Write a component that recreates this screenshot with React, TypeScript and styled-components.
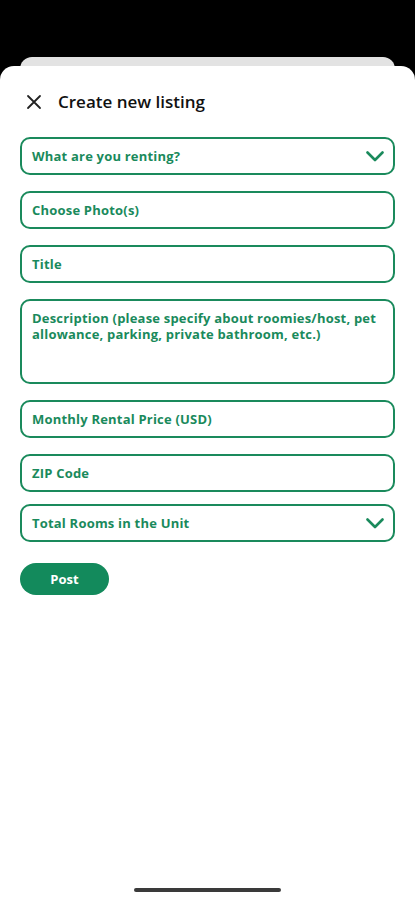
import React from 'react'
import styled, { createGlobalStyle } from 'styled-components'

const GlobalStyle = createGlobalStyle`
  html, body {
    margin: 0;
    padding: 0;
    background: #000;
  }
  body {
    font-family: 'Open Sans', 'Noto Sans', sans-serif;
  }
`

const green = '#1a8a5c'

const Screen = styled.div`
  width: 415px;
  height: 900px;
  background: #000;
  display: flex;
  flex-direction: column;
  overflow: hidden;
`

const BackCard = styled.div`
  height: 20px;
  margin: 57px 20px 0;
  background: #e3e3e3;
  border-radius: 12px 12px 0 0;
  flex-shrink: 0;
`

const Sheet = styled.div`
  flex: 1;
  margin-top: -11px;
  background: #fff;
  border-radius: 14px 14px 0 0;
  display: flex;
  flex-direction: column;
  padding: 0 20px;
`

const Header = styled.div`
  display: flex;
  align-items: center;
  gap: 16px;
  height: 71px;
  padding-left: 6px;
`

const Title = styled.h1`
  margin: 0;
  font-size: 17px;
  font-weight: 600;
  color: #111;
`

const Form = styled.div`
  display: flex;
  flex-direction: column;
`

const Field = styled.div<{ $tall?: boolean; $gap?: number }>`
  box-sizing: border-box;
  height: ${(p) => (p.$tall ? 85 : 38)}px;
  margin-bottom: ${(p) => p.$gap ?? 16}px;
  border: 2px solid ${green};
  border-radius: 10px;
  padding: ${(p) => (p.$tall ? '9px' : '0')} 9px 0 10px;
  display: flex;
  align-items: ${(p) => (p.$tall ? 'flex-start' : 'center')};
  justify-content: space-between;
`

const Label = styled.span`
  font-size: 13px;
  font-weight: 700;
  letter-spacing: 0.2px;
  color: ${green};
  line-height: 16px;
`

const PostButton = styled.button`
  width: 89px;
  height: 32px;
  margin-top: 5px;
  border: none;
  border-radius: 16px;
  background: #138a5c;
  color: #fff;
  font-family: inherit;
  font-size: 13px;
  font-weight: 700;
`

const Spacer = styled.div`
  flex: 1;
`

const HomeBar = styled.div`
  width: 147px;
  height: 4px;
  border-radius: 2px;
  background: #3a3a3a;
  align-self: center;
  margin-bottom: 8px;
`

const Chevron = () => (
  <svg width="18" height="11" viewBox="0 0 18 11">
    <path d="M1.5 1.5 L9 9 L16.5 1.5" fill="none" stroke={green} strokeWidth="2.6" strokeLinecap="round" strokeLinejoin="round" />
  </svg>
)

const CloseIcon = () => (
  <svg width="16" height="16" viewBox="0 0 16 16">
    <path d="M2 2 L14 14 M14 2 L2 14" stroke="#222" strokeWidth="1.8" strokeLinecap="round" />
  </svg>
)

const App = () => {
  return (
    <Screen>
      <GlobalStyle />
      <BackCard />
      <Sheet>
        <Header>
          <CloseIcon />
          <Title>Create new listing</Title>
        </Header>
        <Form>
          <Field>
            <Label>What are you renting?</Label>
            <Chevron />
          </Field>
          <Field>
            <Label>Choose Photo(s)</Label>
          </Field>
          <Field>
            <Label>Title</Label>
          </Field>
          <Field $tall>
            <Label>Description (please specify about roomies/host, pet allowance, parking, private bathroom, etc.)</Label>
          </Field>
          <Field>
            <Label>Monthly Rental Price (USD)</Label>
          </Field>
          <Field $gap={12}>
            <Label>ZIP Code</Label>
          </Field>
          <Field>
            <Label>Total Rooms in the Unit</Label>
            <Chevron />
          </Field>
          <PostButton>Post</PostButton>
        </Form>
        <Spacer />
        <HomeBar />
      </Sheet>
    </Screen>
  )
}

export default App
